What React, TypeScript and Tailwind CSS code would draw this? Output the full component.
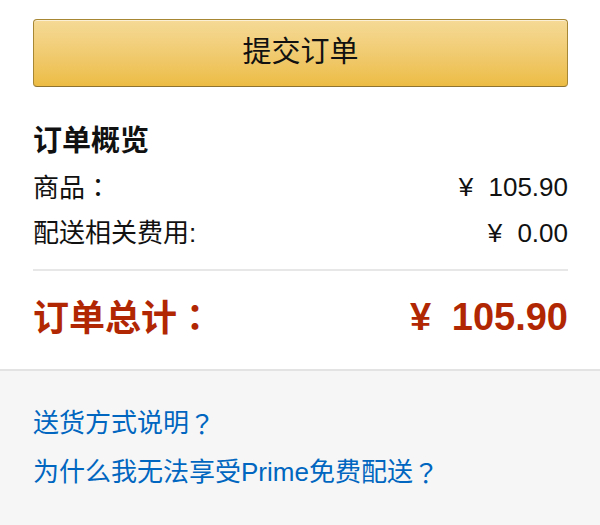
import React from "react";

const tc = { fontFamily: '"Noto Sans CJK TC", sans-serif' };

function P({ c }: { c: string }) {
  return <span style={tc}>{c}</span>;
}

export default function App() {
  const font = { fontFamily: '"Liberation Sans", "Noto Sans CJK SC", sans-serif' };
  return (
    <div className="w-[600px] h-[525px] bg-white flex flex-col overflow-hidden text-[#111]" style={font}>
      <div className="pl-[33px] pr-[32px] pt-[19px] flex flex-col">
        <button className="h-[68px] w-full rounded-[4px] border border-[#a88734] border-b-[#8d7230] bg-gradient-to-b from-[#f5da96] to-[#ecbc43] shadow-[inset_0_1px_0_rgba(255,255,255,0.6)] flex items-center justify-center text-[29px] text-[#111]">
          提交订单
        </button>
        <div className="mt-[36px] h-[36px] flex items-center text-[29px] font-bold leading-none">订单概览</div>
        <div className="mt-[5px] h-[46px] flex items-center justify-between text-[26px] leading-none">
          <span>商品<P c="：" /></span>
          <span><span className="mr-[8px]">¥</span> 105.90</span>
        </div>
        <div className="h-[46px] flex items-center justify-between text-[26px] leading-none">
          <span>配送相关费用:</span>
          <span><span className="mr-[8px]">¥</span> 0.00</span>
        </div>
        <div className="mt-[13px] h-[2px] bg-[#e7e7e7]" />
        <div className="mt-[24px] h-[44px] flex items-center justify-between text-[36px] font-bold leading-none text-[#b12704]">
          <span>订单总计<P c="：" /></span>
          <span className="text-[38px]"><span className="mr-[10px]">¥</span> 105.90</span>
        </div>
      </div>
      <div className="mt-[30px] flex-1 border-t-2 border-[#e3e3e3] bg-[#f6f6f6] pl-[33px] pt-[27px] text-[26px] text-[#0066c0] leading-none">
        <div className="h-[49px] flex items-center">送货方式说明<P c="？" /></div>
        <div className="h-[49px] flex items-center">为什么我无法享受Prime免费配送<P c="？" /></div>
      </div>
    </div>
  );
}
